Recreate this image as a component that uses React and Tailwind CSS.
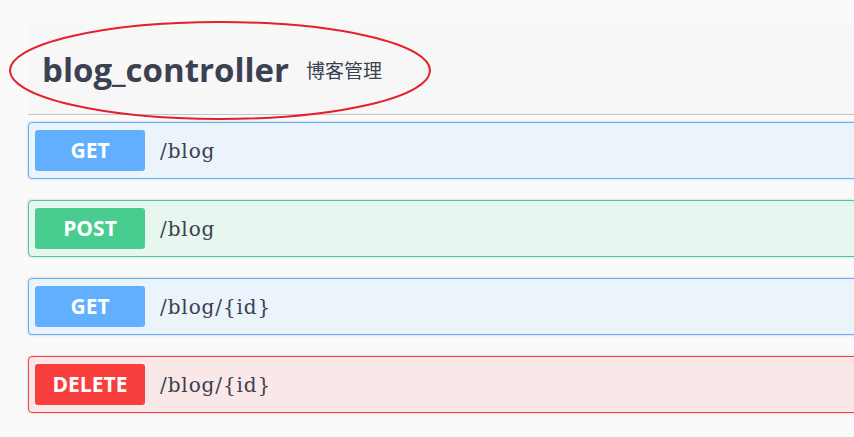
const ops = [
  { method: "GET", path: "/blog", badge: "bg-[#61affe]", card: "bg-[#ebf3fb] border-[#61affe]" },
  { method: "POST", path: "/blog", badge: "bg-[#49cc90]", card: "bg-[#e8f6f0] border-[#49cc90]" },
  { method: "GET", path: "/blog/{id}", badge: "bg-[#61affe]", card: "bg-[#ebf3fb] border-[#61affe]" },
  { method: "DELETE", path: "/blog/{id}", badge: "bg-[#f93e3e]", card: "bg-[#fae7e7] border-[#f93e3e]" },
];

const App = () => {
  return (
    <div className="relative h-[437px] w-full overflow-hidden bg-[#fafafa] pl-[28px] pt-[23px]">
      {/* Tag heading */}
      <div className="flex h-[92px] items-center gap-[17px] border-b border-[#c4c4c4] bg-[#f7f7f7] pl-[14px] pt-[2px]">
        <h3 className="font-['Open_Sans',sans-serif] text-[33px] font-bold leading-none text-[#3b4151]">
          blog_controller
        </h3>
        <span className="font-['Noto_Sans_CJK_SC',sans-serif] text-[19px] leading-none text-[#3b4151]">
          博客管理
        </span>
      </div>

      {/* Operations */}
      <div className="flex w-[860px] flex-col gap-[21px] pt-[7px]">
        {ops.map((op, i) => (
          <div
            key={i}
            className={`flex h-[57px] items-center gap-[15px] rounded-[4px] border px-[6px] shadow-[0_0_3px_rgba(0,0,0,0.19)] ${op.card}`}
          >
            <span
              className={`flex h-[41px] w-[110px] items-center justify-center rounded-[3px] font-['Open_Sans',sans-serif] text-[21px] font-bold text-white ${op.badge}`}
            >
              {op.method}
            </span>
            <span className="font-['DejaVu_Serif',serif] text-[20px] tracking-[0.9px] text-[#3b4151]">
              {op.path}
            </span>
          </div>
        ))}
      </div>

      {/* Annotation ellipse */}
      <svg
        className="pointer-events-none absolute left-0 top-0"
        width="440"
        height="130"
        viewBox="0 0 440 130"
      >
        <ellipse cx="220" cy="70.5" rx="210" ry="48.5" fill="none" stroke="#e3202b" strokeWidth="2" />
      </svg>
    </div>
  );
};

export default App;
